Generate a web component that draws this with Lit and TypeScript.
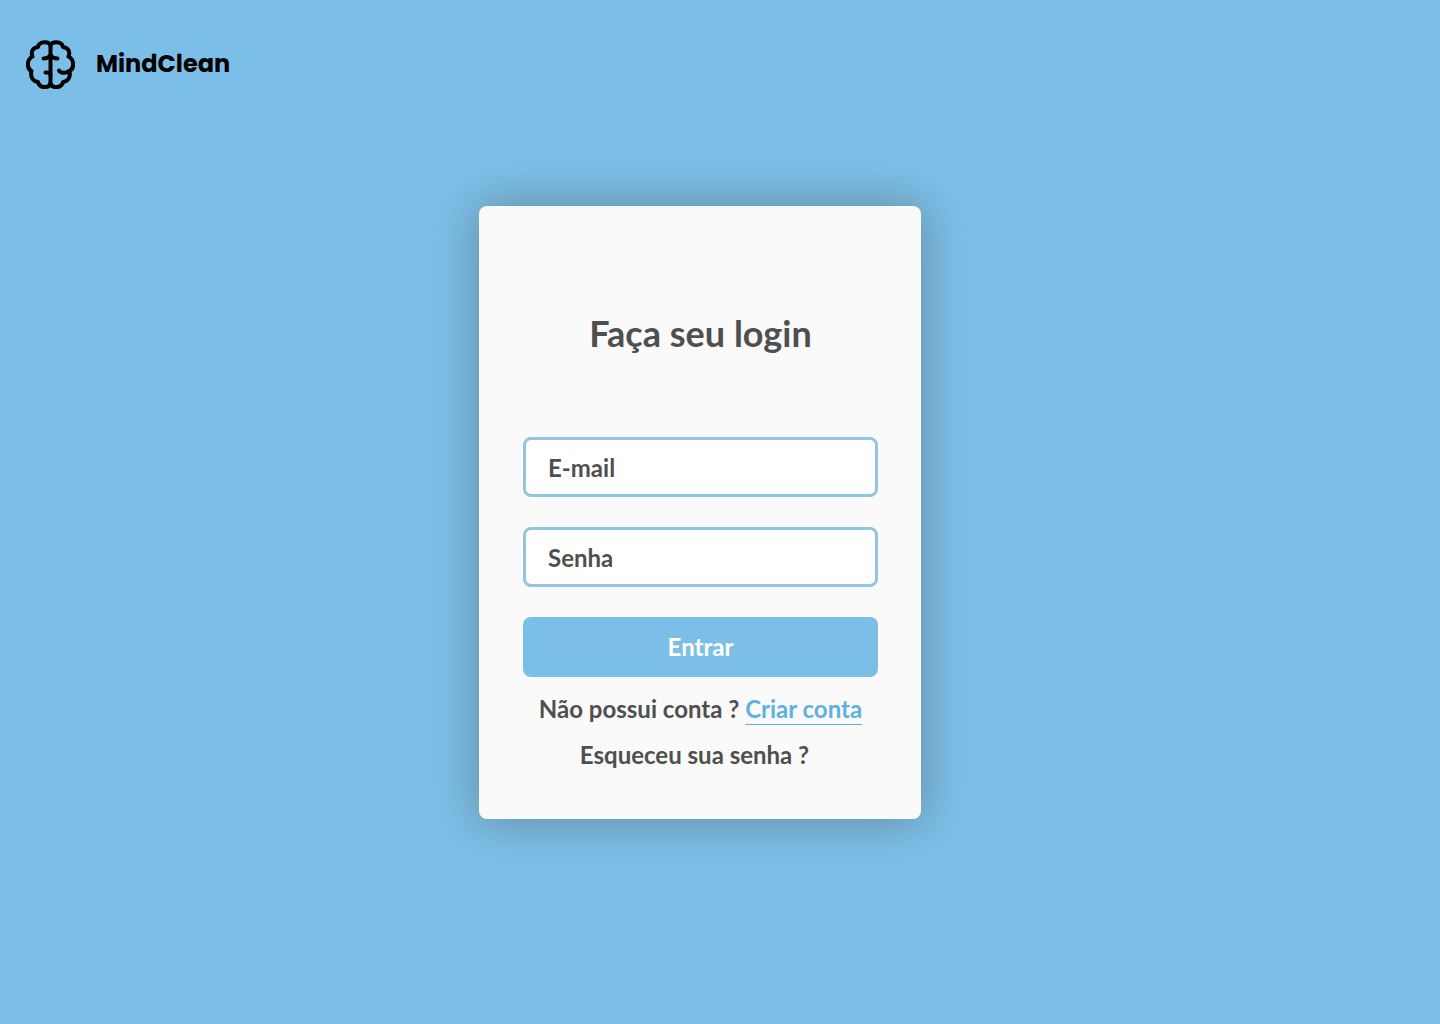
import { LitElement, html, css, svg } from "lit";
import { customElement } from "lit/decorators.js";

const brainHalf = svg`
  <path d="M24.500 5.500C23.500 1.500 13.500 .5 12 7C7 7.500 4.500 11.500 6.500 16.500C.5 19.500 .5 28.500 5.500 31C4 37 7 41.500 12 42C13.500 48.500 23 48.500 24.500 43.500" />`;

@customElement("brain-logo")
export class BrainLogo extends LitElement {
  static styles = css`
    :host { display: block; flex: none; width: 49px; height: 49px; }
    .icon { display: block; width: 100%; height: 100%; }
  `;
  render() {
    return html`
      <svg class="icon" viewBox="0 0 49 49" fill="none" stroke="#000" stroke-width="4" stroke-linecap="round" stroke-linejoin="round" aria-hidden="true">
        ${brainHalf}
        <g transform="translate(49 0) scale(-1 1)">${brainHalf}</g>
        <path d="M24.500 4V45" />
        <path d="M17.500 18.500C20.500 18.500 23 17.500 24.500 15C26 17.500 28.500 18.500 31.500 18.500" />
        <path d="M19.500 32.500H21C22.500 32.500 23.500 33 24.500 34.500" />
        <path d="M33 30.500C34.500 33 40 34 43 31" />
      </svg>
    `;
  }
}

@customElement("app-root")
export class AppRoot extends LitElement {
  static styles = css`
    :host {
      display: block;
      font-family: Lato, "Liberation Sans", sans-serif;
      font-weight: 700;
      font-size: 24px;
      line-height: 30px;
      color: #4f4f4f;
    }
    * { box-sizing: border-box; }
    .page {
      display: flex;
      flex-direction: column;
      min-height: 100vh;
      background: #7bbfe8;
    }
    .brand {
      display: flex;
      align-items: center;
      gap: 21px;
      padding: 40px 26px 0;
      color: #000;
      font-family: Poppins, Inter, sans-serif;
    }
    .name { padding-bottom: 2px; }
    .main {
      display: flex;
      justify-content: center;
      padding: 117px 40px 40px 0;
    }
    .card {
      width: 100%;
      max-width: 442px;
      padding: 103px 43px 49px 44px;
      border-radius: 8px;
      background: #fafafa;
      box-shadow: 0 0 48px rgba(79, 79, 79, 0.5);
    }
    .title {
      margin: 0 0 80px;
      font-size: 36px;
      line-height: 48px;
      text-align: center;
    }
    .form {
      display: flex;
      flex-direction: column;
      gap: 30px;
    }
    .field {
      display: grid;
      align-items: center;
    }
    .input, .label { grid-area: 1 / 1; }
    .label {
      padding: 2px 25px 0;
      pointer-events: none;
    }
    .input:not(:placeholder-shown) + .label { visibility: hidden; }
    .input, .submit {
      display: block;
      width: 100%;
      height: 60px;
      border-radius: 8px;
      font: inherit;
    }
    .input {
      padding: 2px 22px 0;
      border: 3px solid #94c5de;
      background: #fff;
      color: inherit;
    }
    .submit {
      padding: 0;
      border: 0;
      background: #7bbfe8;
      color: #fff;
      cursor: pointer;
    }
    .links {
      display: flex;
      flex-direction: column;
      align-items: center;
      gap: 16px;
      margin-top: 17px;
    }
    .text { margin: 0; }
    .create {
      color: #5eb1e2;
      text-decoration: underline;
      text-decoration-thickness: 1px;
      text-underline-offset: 6px;
    }
    .forgot {
      padding-right: 12px;
      color: inherit;
      text-decoration: none;
    }
  `;

  render() {
    return html`
      <div class="page">
        <header class="brand">
          <brain-logo></brain-logo>
          <span class="name">MindClean</span>
        </header>
        <main class="main">
          <section class="card">
            <h1 class="title">Faça seu login</h1>
            <form class="form" @submit=${(e: Event) => e.preventDefault()}>
              <div class="field">
                <input class="input" id="email" type="email" placeholder=" " autocomplete="email" />
                <label class="label" for="email">E-mail</label>
              </div>
              <div class="field">
                <input class="input" id="senha" type="password" placeholder=" " autocomplete="current-password" />
                <label class="label" for="senha">Senha</label>
              </div>
              <button class="submit" type="submit">Entrar</button>
            </form>
            <div class="links">
              <p class="text">Não possui conta ? <a class="create" href="#criar-conta">Criar conta</a></p>
              <a class="forgot" href="#esqueceu-senha">Esqueceu sua senha ?</a>
            </div>
          </section>
        </main>
      </div>
    `;
  }
}
